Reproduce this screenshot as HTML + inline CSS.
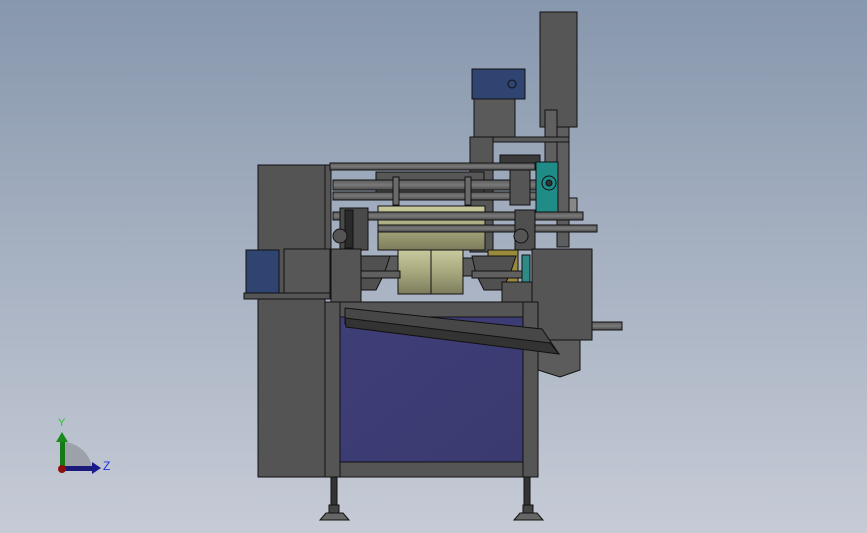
<!DOCTYPE html>
<html><head><style>
html,body{margin:0;padding:0;width:867px;height:533px;overflow:hidden}
body{background:linear-gradient(#8797ad 0%,#a4afc0 45%,#c6cbd6 100%)}
svg{position:absolute;left:0;top:0}
</style></head><body>
<svg width="867" height="533" viewBox="0 0 867 533" xmlns="http://www.w3.org/2000/svg" font-family="Liberation Sans, sans-serif">
<defs>
<linearGradient id="sh" x1="0" y1="0" x2="0" y2="1"><stop offset="0" stop-color="#5a5a5a"/><stop offset=".5" stop-color="#7a7a7a"/><stop offset="1" stop-color="#4a4a4a"/></linearGradient>
<linearGradient id="ol" x1="0" y1="0" x2="0" y2="1"><stop offset="0" stop-color="#c9c99e"/><stop offset=".5" stop-color="#a8a87e"/><stop offset="1" stop-color="#7c7c5c"/></linearGradient>
<linearGradient id="bl" x1="0" y1="0" x2="1" y2="1"><stop offset="0" stop-color="#3f3e78"/><stop offset="1" stop-color="#3a3a70"/></linearGradient>
</defs>
<g stroke="#111" stroke-width="1">
<!-- tall motor right -->
<rect x="540" y="12" width="37" height="115" fill="#565656"/>
<rect x="545" y="110" width="12" height="60" fill="#606060"/>
<rect x="557" y="127" width="12" height="120" fill="#5e5e5e"/>
<!-- blue motor top -->
<rect x="472" y="69" width="53" height="30" fill="#2f4470"/>
<circle cx="512" cy="84" r="4" fill="#2f4470"/>
<rect x="474" y="99" width="41" height="38" fill="#5a5a5a"/>
<rect x="470" y="137" width="23" height="115" fill="#565656"/>
<rect x="493" y="137" width="76" height="5" fill="#5a5a5a"/>
<rect x="500" y="155" width="40" height="8" fill="#3a3a3a"/>
<!-- left cabinet -->
<rect x="258" y="165" width="67" height="312" fill="#545454"/>
<rect x="325" y="165" width="6" height="85" fill="#555"/>
<!-- shafts -->
<rect x="330" y="163" width="205" height="7" fill="url(#sh)"/>
<rect x="376" y="172" width="108" height="22" fill="#575757"/>
<rect x="333" y="180" width="205" height="10" fill="url(#sh)"/>
<rect x="333" y="192" width="205" height="8" fill="url(#sh)"/>
<rect x="393" y="177" width="6" height="28" fill="#6a6a6a"/>
<rect x="465" y="177" width="6" height="28" fill="#6a6a6a"/>
<rect x="510" y="170" width="20" height="35" fill="#555"/>
<!-- green gear box -->
<rect x="536" y="162" width="22" height="52" fill="#1f8c88"/>
<circle cx="549" cy="183" r="7" fill="#1f8c88"/>
<circle cx="549" cy="183" r="3" fill="#333"/>
<rect x="569" y="198" width="8" height="14" fill="#888"/>
<!-- big roller -->
<rect x="378" y="206" width="107" height="44" fill="url(#ol)"/>
<rect x="333" y="212" width="250" height="8" fill="url(#sh)"/>
<rect x="378" y="225" width="219" height="7" fill="url(#sh)"/>
<rect x="340" y="208" width="28" height="42" fill="#4a4a4a"/>
<rect x="345" y="210" width="8" height="38" fill="#2a2a2a"/>
<circle cx="340" cy="236" r="7" fill="#555"/>
<rect x="515" y="210" width="20" height="40" fill="#4f4f4f"/>
<circle cx="521" cy="236" r="7" fill="#555"/>
<rect x="488" y="250" width="30" height="38" fill="#9a8a3c"/>
<!-- lower rollers -->
<rect x="398" y="250" width="33" height="44" fill="url(#ol)"/>
<rect x="431" y="250" width="32" height="44" fill="url(#ol)"/>
<rect x="378" y="256" width="20" height="20" fill="#5a5a5a"/>
<rect x="463" y="258" width="20" height="18" fill="#5a5a5a"/>
<!-- hoppers -->
<polygon points="346,256 390,256 384,274 376,290 358,290 352,274" fill="#505050"/>
<polygon points="472,256 516,256 510,274 502,290 484,290 476,274" fill="#505050"/>
<rect x="345" y="271" width="55" height="7" fill="#606060"/>
<rect x="472" y="271" width="55" height="7" fill="#606060"/>
<rect x="330" y="255" width="8" height="40" fill="#2d8a84"/>
<rect x="522" y="255" width="8" height="40" fill="#2d8a84"/>
<!-- left motor -->
<rect x="284" y="249" width="46" height="44" fill="#575757"/>
<rect x="246" y="250" width="33" height="43" fill="#2f4470"/>
<rect x="244" y="293" width="86" height="6" fill="#555"/>
<rect x="331" y="249" width="30" height="53" fill="#555"/>
<!-- right block -->
<rect x="532" y="249" width="60" height="91" fill="#555"/>
<rect x="502" y="282" width="30" height="20" fill="#555"/>
<rect x="592" y="322" width="30" height="8" fill="url(#sh)"/>
<polygon points="538,340 580,340 580,370 560,377 538,370" fill="#5c5c5c"/>
<!-- front frame -->
<rect x="325" y="302" width="213" height="175" fill="#555"/>
<rect x="340" y="317" width="183" height="145" fill="url(#bl)"/>
<rect x="325" y="302" width="15" height="175" fill="#555"/>
<rect x="523" y="302" width="15" height="175" fill="#555"/>
<!-- chute -->
<polygon points="345,308 542,329 559,354 345,324" fill="#474747"/>
<polygon points="345,318 550,343 559,354 346,327" fill="#333"/>
<!-- legs -->
<rect x="331" y="477" width="6" height="28" fill="#333"/>
<polygon points="320,520 349,520 343,513 326,513" fill="#666"/>
<rect x="329" y="505" width="10" height="8" fill="#444"/>
<rect x="524" y="477" width="6" height="28" fill="#333"/>
<polygon points="514,520 543,520 537,513 520,513" fill="#666"/>
<rect x="523" y="505" width="10" height="8" fill="#444"/>
</g>
<!-- axis triad -->
<path d="M62 468 L62 442 A30 30 0 0 1 92 468 Z" fill="#9da2aa"/>
<rect x="60" y="440" width="5" height="30" fill="#157a15"/>
<polygon points="56,442 62,432 68,442" fill="#1a8a1a"/>
<rect x="62" y="466" width="32" height="5" fill="#1a1a7a"/>
<polygon points="92,462 101,468 92,474" fill="#1a1a8a"/>
<circle cx="62" cy="469" r="4" fill="#8a1010"/>
<text x="58" y="426" font-size="11" fill="#22cc22">Y</text>
<text x="103" y="470" font-size="12" fill="#2233dd">Z</text>
</svg>
</body></html>
